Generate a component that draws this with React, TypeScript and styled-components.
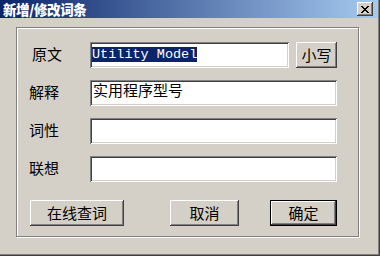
import React from 'react';
import styled, { createGlobalStyle } from 'styled-components';

const CJK = `"Noto Sans CJK SC", "Noto Sans", sans-serif`;

const GlobalStyle = createGlobalStyle`
  html, body {
    margin: 0;
    padding: 0;
    background: #d4d0c8;
  }
`;

const FIELDS = [
  { label: '原文', indent: 3 },
  { label: '解释', indent: 0, value: '实用程序型号' },
  { label: '词性', indent: 0 },
  { label: '联想', indent: 0 },
];

export default function App() {
  return (
    <>
      <GlobalStyle />
      <Window>
        <TitleBar>
          <Title>新增/修改词条</Title>
          <CloseButton aria-label="close">
            <svg width="8" height="7" viewBox="0 0 8 7" shapeRendering="crispEdges">
              <path d="M0 0h2v1h-2zM6 0h2v1h-2zM1 1h2v1h-2zM5 1h2v1h-2zM2 2h4v1h-4zM3 3h2v1h-2zM2 4h4v1h-4zM1 5h2v1h-2zM5 5h2v1h-2zM0 6h2v1h-2zM6 6h2v1h-2z" fill="#000" />
            </svg>
          </CloseButton>
        </TitleBar>
        <Body>
          <GroupBox>
            <FormGrid>
              {FIELDS.map((field, idx) => (
                <React.Fragment key={field.label}>
                  <Label $indent={field.indent}>{field.label}</Label>
                  {idx === 0 ? (
                    <FieldRow>
                      <TextBox $width={199}>
                        <Selected>Utility Model</Selected>
                      </TextBox>
                      <Button $width={41}>小写</Button>
                    </FieldRow>
                  ) : (
                    <TextBox $width={247}>{field.value}</TextBox>
                  )}
                </React.Fragment>
              ))}
            </FormGrid>
            <ButtonRow>
              <Button $width={94} $offset={1}>在线查词</Button>
              <Button $width={69} $offset={46}>取消</Button>
              <Button $width={67} $offset={31} $default>确定</Button>
            </ButtonRow>
          </GroupBox>
        </Body>
      </Window>
    </>
  );
}

const Window = styled.div`
  width: 380px;
  height: 256px;
  box-sizing: border-box;
  padding: 0 2px 2px 0;
  background: #d4d0c8;
  box-shadow: inset -1px -1px #404040, inset -2px -2px #808080;
  display: flex;
  flex-direction: column;
  font-family: ${CJK};
`;

const TitleBar = styled.div`
  height: 18px;
  display: flex;
  align-items: center;
  justify-content: space-between;
  padding: 0 5px 0 3px;
  background: linear-gradient(to right, #0a246a, #a6caf0);
`;

const Title = styled.span`
  color: #fff;
  font-weight: 900;
  font-size: 13.5px;
  line-height: 18px;
  letter-spacing: -0.4px;
`;

const CloseButton = styled.div`
  width: 16px;
  height: 14px;
  box-sizing: border-box;
  display: flex;
  align-items: center;
  justify-content: center;
  background: #d4d0c8;
  box-shadow: inset -1px -1px #404040, inset 1px 1px #fff, inset -2px -2px #808080;
`;

const Body = styled.div`
  flex: 1;
  padding: 9px 0 0 16px;
`;

const GroupBox = styled.div`
  width: 343px;
  height: 210px;
  box-sizing: border-box;
  border: 1px solid #808080;
  box-shadow: inset 1px 1px #fff, 1px 1px #fff;
  padding: 14px 20px 0 12px;
`;

const FormGrid = styled.div`
  display: grid;
  grid-template-columns: 61px 247px;
  grid-auto-rows: 26px;
  row-gap: 12px;
`;

const Label = styled.div<{ $indent: number }>`
  display: flex;
  align-items: center;
  padding: 0 0 3px ${(p) => p.$indent}px;
  font-size: 15px;
  line-height: 16px;
  color: #000;
`;

const FieldRow = styled.div`
  display: flex;
  gap: 7px;
`;

const TextBox = styled.div<{ $width: number }>`
  width: ${(p) => p.$width}px;
  height: 26px;
  box-sizing: border-box;
  padding: 2px 3px;
  background: #fff;
  box-shadow: inset 1px 1px #808080, inset -1px -1px #fff, inset 2px 2px #404040, inset -2px -2px #d4d0c8;
  font-size: 15px;
  line-height: 16px;
  color: #000;
  white-space: nowrap;
  overflow: hidden;
`;

const Selected = styled.span`
  display: inline-block;
  margin-left: -1px;
  background: #0a246a;
  color: #fff;
  font-family: "Liberation Mono", monospace;
  font-size: 13.5px;
  line-height: 15px;
`;

const ButtonRow = styled.div`
  display: flex;
  margin-top: 18px;
`;

const Button = styled.div<{ $width: number; $offset?: number; $default?: boolean }>`
  width: ${(p) => p.$width}px;
  height: 26px;
  margin-left: ${(p) => p.$offset ?? 0}px;
  box-sizing: border-box;
  display: flex;
  align-items: center;
  justify-content: center;
  background: #d4d0c8;
  font-size: 15px;
  line-height: 16px;
  color: #000;
  box-shadow: ${(p) =>
    p.$default
      ? 'inset 0 0 0 1px #000, inset -2px -2px #404040, inset 2px 2px #fff, inset -3px -3px #808080'
      : 'inset -1px -1px #404040, inset 1px 1px #fff, inset -2px -2px #808080'};
`;
